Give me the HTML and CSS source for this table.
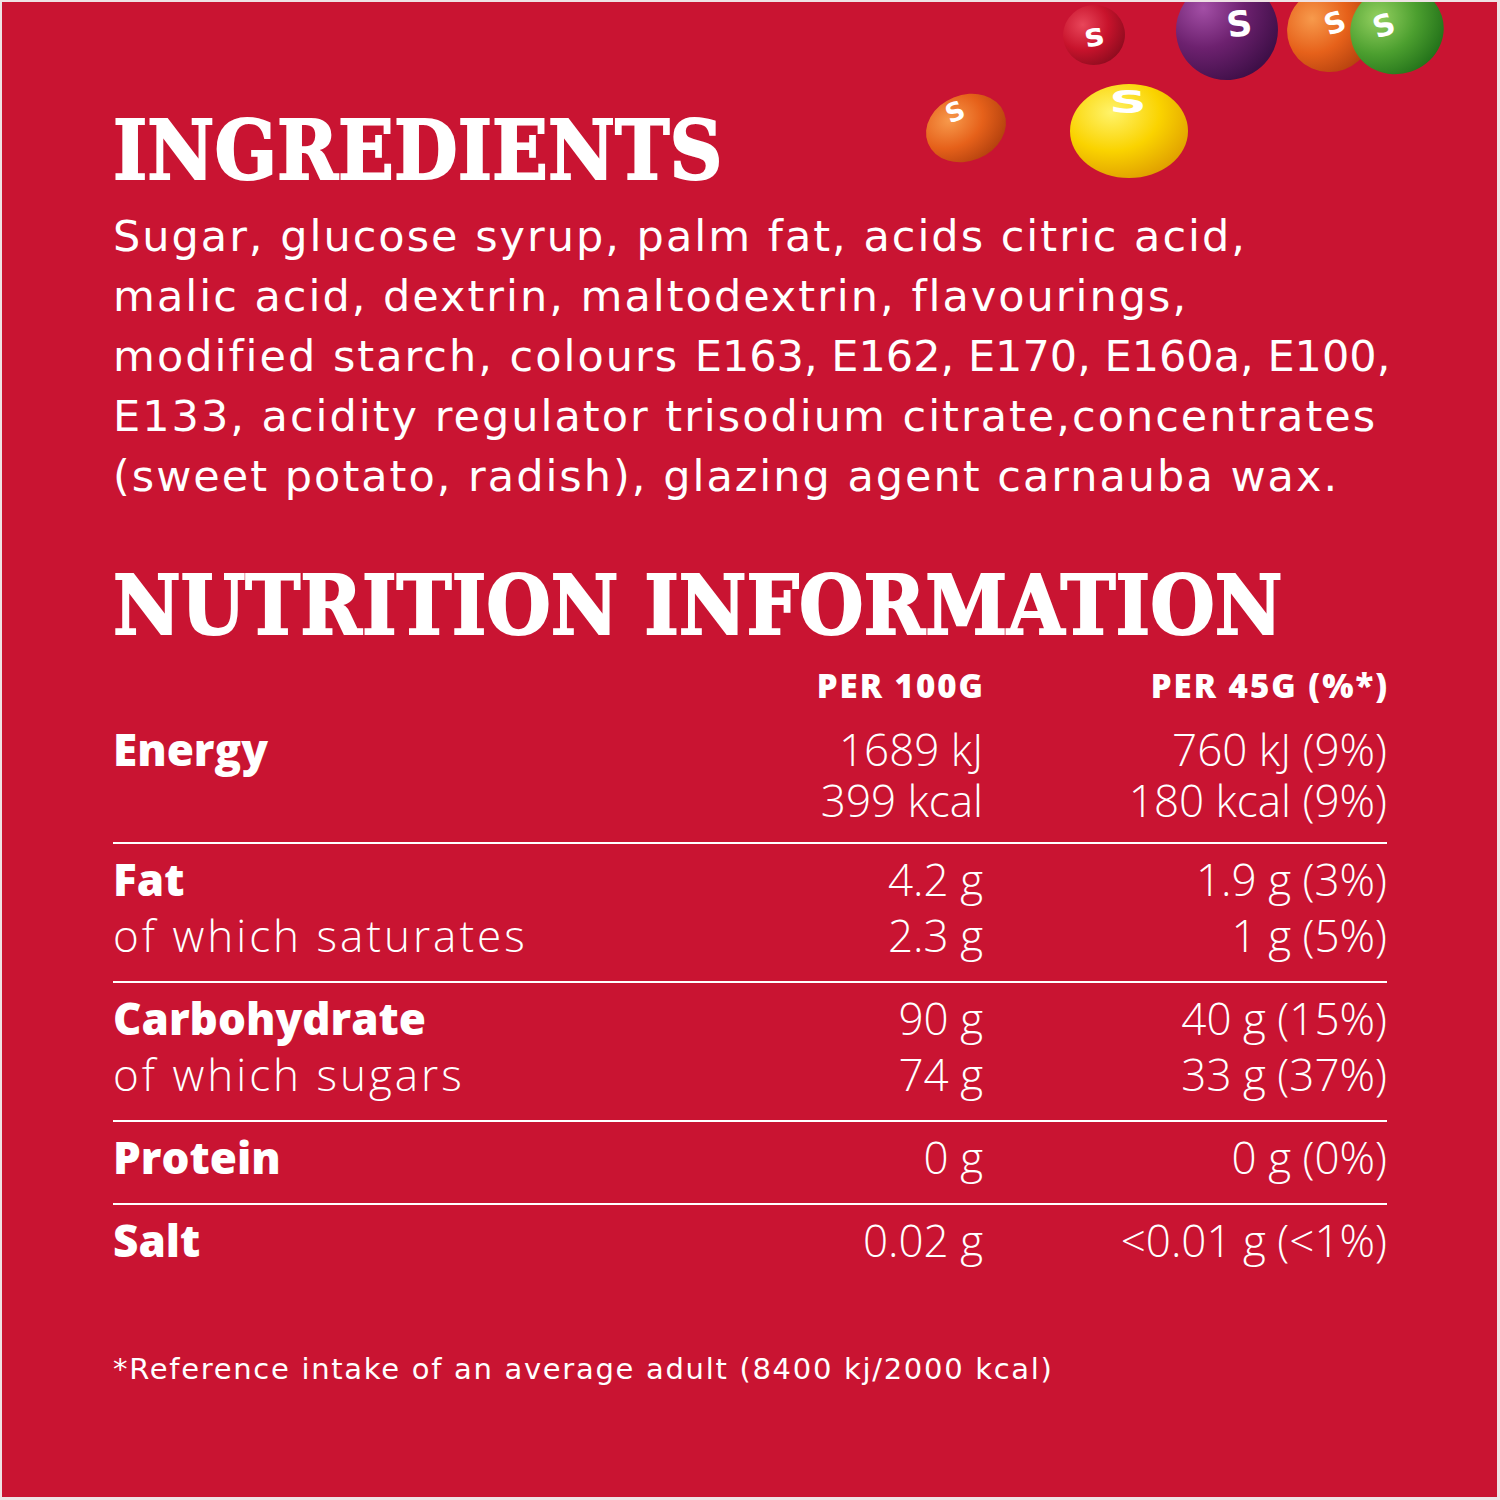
FILE: index.html
```html
<!DOCTYPE html>
<html lang="en">
<head>
<meta charset="utf-8">
<title>Ingredients &amp; Nutrition Information</title>
<link rel="stylesheet" href="styles.css">
</head>
<body>
<main class="panel">
  <svg class="candies" viewBox="897 2 600 200" width="600" height="200" aria-hidden="true">
    <defs>
      <radialGradient id="gRed" cx="35%" cy="30%" r="75%">
        <stop offset="0" stop-color="#e8465a"/>
        <stop offset="0.55" stop-color="#c8132c"/>
        <stop offset="1" stop-color="#8f0c1f"/>
      </radialGradient>
      <radialGradient id="gPurple" cx="30%" cy="25%" r="80%">
        <stop offset="0" stop-color="#a34fa6"/>
        <stop offset="0.5" stop-color="#6d216f"/>
        <stop offset="1" stop-color="#3f0f48"/>
      </radialGradient>
      <radialGradient id="gOrange" cx="35%" cy="30%" r="75%">
        <stop offset="0" stop-color="#f79a4c"/>
        <stop offset="0.55" stop-color="#e6611a"/>
        <stop offset="1" stop-color="#b5420e"/>
      </radialGradient>
      <radialGradient id="gGreen" cx="35%" cy="30%" r="75%">
        <stop offset="0" stop-color="#94d060"/>
        <stop offset="0.55" stop-color="#4c9f2f"/>
        <stop offset="1" stop-color="#23721a"/>
      </radialGradient>
      <radialGradient id="gYellow" cx="35%" cy="30%" r="75%">
        <stop offset="0" stop-color="#fff36a"/>
        <stop offset="0.55" stop-color="#fad300"/>
        <stop offset="1" stop-color="#e0a000"/>
      </radialGradient>
    </defs>
    <!-- red -->
    <g transform="rotate(-10 1094 35)">
      <ellipse cx="1094" cy="35" rx="31" ry="30" fill="url(#gRed)"/>
      <text class="s" x="1094" y="46" font-size="32" text-anchor="middle">s</text>
    </g>
    <!-- purple -->
    <g transform="rotate(-8 1227 30)">
      <ellipse cx="1227" cy="30" rx="51" ry="50" fill="url(#gPurple)"/>
      <text class="s" x="1240" y="38" font-size="35" text-anchor="middle">S</text>
    </g>
    <!-- orange top right -->
    <g transform="rotate(-20 1330 30)">
      <ellipse cx="1330" cy="30" rx="43" ry="42" fill="url(#gOrange)"/>
      <text class="s" x="1337" y="35" font-size="29" text-anchor="middle">S</text>
    </g>
    <!-- green -->
    <g transform="rotate(-18 1397 30)">
      <ellipse cx="1397" cy="30" rx="47" ry="44" fill="url(#gGreen)"/>
      <text class="s" x="1386" y="32" font-size="30" text-anchor="middle">S</text>
    </g>
    <!-- orange left -->
    <g transform="rotate(-22 966 128)">
      <ellipse cx="966" cy="128" rx="41" ry="33" fill="url(#gOrange)"/>
      <text class="s" x="962" y="118" font-size="26" text-anchor="middle">S</text>
    </g>
    <!-- yellow -->
    <g>
      <ellipse cx="1129" cy="131" rx="59" ry="47" fill="url(#gYellow)"/>
      <text class="s" x="1128" y="113" font-size="40" text-anchor="middle" transform="translate(1128 113) scale(1.3 0.8) translate(-1128 -113)">S</text>
    </g>
  </svg>

  <section class="ingredients">
    <h1 class="heading">INGREDIENTS</h1>
    <p class="ing-text">Sugar, glucose syrup, palm fat, acids citric acid,<br>malic acid, dextrin, maltodextrin, flavourings,<br>modified starch, colours <span class="codes">E163, E162, E170, E160a, E100,</span><br>E133, acidity regulator trisodium citrate,concentrates<br>(sweet potato, radish), glazing agent carnauba wax.</p>
  </section>

  <section class="nutrition">
    <h2 class="heading heading-long">NUTRITION INFORMATION</h2>
    <div class="table">
      <div class="row head">
        <div></div>
        <div class="num">PER 100G</div>
        <div class="num">PER 45G (%*)</div>
      </div>
      <div class="row group energy">
        <div class="label"><div class="line strong">Energy</div></div>
        <div class="num"><div class="line">1689 kJ</div><div class="line">399 kcal</div></div>
        <div class="num"><div class="line">760 kJ (9%)</div><div class="line">180 kcal (9%)</div></div>
      </div>
      <div class="row group">
        <div class="label"><div class="line strong">Fat</div><div class="line sub">of which saturates</div></div>
        <div class="num"><div class="line">4.2 g</div><div class="line">2.3 g</div></div>
        <div class="num"><div class="line">1.9 g (3%)</div><div class="line">1 g (5%)</div></div>
      </div>
      <div class="row group">
        <div class="label"><div class="line strong">Carbohydrate</div><div class="line sub">of which sugars</div></div>
        <div class="num"><div class="line">90 g</div><div class="line">74 g</div></div>
        <div class="num"><div class="line">40 g (15%)</div><div class="line">33 g (37%)</div></div>
      </div>
      <div class="row group">
        <div class="label"><div class="line strong">Protein</div></div>
        <div class="num"><div class="line">0 g</div></div>
        <div class="num"><div class="line">0 g (0%)</div></div>
      </div>
      <div class="row group last">
        <div class="label"><div class="line strong">Salt</div></div>
        <div class="num"><div class="line">0.02 g</div></div>
        <div class="num"><div class="line">&lt;0.01 g (&lt;1%)</div></div>
      </div>
    </div>
  </section>

  <p class="footnote">*Reference intake of an average adult (8400 kj/2000 kcal)</p>
</main>
</body>
</html>
```

FILE: styles.css
```css
html, body {
  margin: 0;
  padding: 0;
}

body {
  background: #efe3e5;
  width: 1500px;
  height: 1500px;
  overflow: hidden;
}

.panel {
  position: relative;
  box-sizing: border-box;
  margin: 2px 0 0 2px;
  width: 1495px;
  height: 1495px;
  background: #c91432;
  color: #ffffff;
  padding: 107px 110px 0 111px;
  overflow: hidden;
  font-family: "Open Sans", "DejaVu Sans", sans-serif;
}

.candies {
  position: absolute;
  top: 0;
  right: 0;
}

.candies .s {
  fill: #ffffff;
  font-family: "DejaVu Sans", sans-serif;
  font-weight: 700;
}

.heading {
  margin: 0;
  font-family: "DejaVu Serif", serif;
  font-weight: 700;
  font-size: 82px;
  line-height: 82px;
  letter-spacing: 0;
  white-space: nowrap;
  -webkit-text-stroke: 2px #ffffff;
  transform: scaleX(0.895);
  transform-origin: left center;
}

.heading-long {
  transform: scaleX(0.903);
}

.ing-text {
  margin: 15px 0 0;
  font-family: "DejaVu Sans", sans-serif;
  font-size: 43px;
  line-height: 60px;
  letter-spacing: 2px;
  white-space: nowrap;
}

.codes {
  letter-spacing: 0;
}

.nutrition {
  margin-top: 58px;
}

.table {
  margin-top: 20px;
}

.row {
  display: grid;
  grid-template-columns: 1fr 300px 404px;
}

.num {
  text-align: right;
}

.head {
  font-weight: 800;
  font-size: 33px;
  line-height: 40px;
  letter-spacing: 2px;
}

.head .num {
  margin-right: -2px;
}

.group {
  font-size: 44px;
  line-height: 56px;
  padding: 7px 0 18px;
  border-bottom: 2px solid #ffffff;
}

.group.energy {
  line-height: 51px;
  padding: 18px 0 16px;
}

.group.last {
  border-bottom: none;
}

.line {
  font-weight: 300;
}

.line.sub {
  letter-spacing: 3px;
}

.line.strong {
  font-weight: 800;
}

.footnote {
  margin: 63px 0 0;
  font-family: "DejaVu Sans", sans-serif;
  font-size: 29px;
  line-height: 40px;
  letter-spacing: 1.7px;
}
```
